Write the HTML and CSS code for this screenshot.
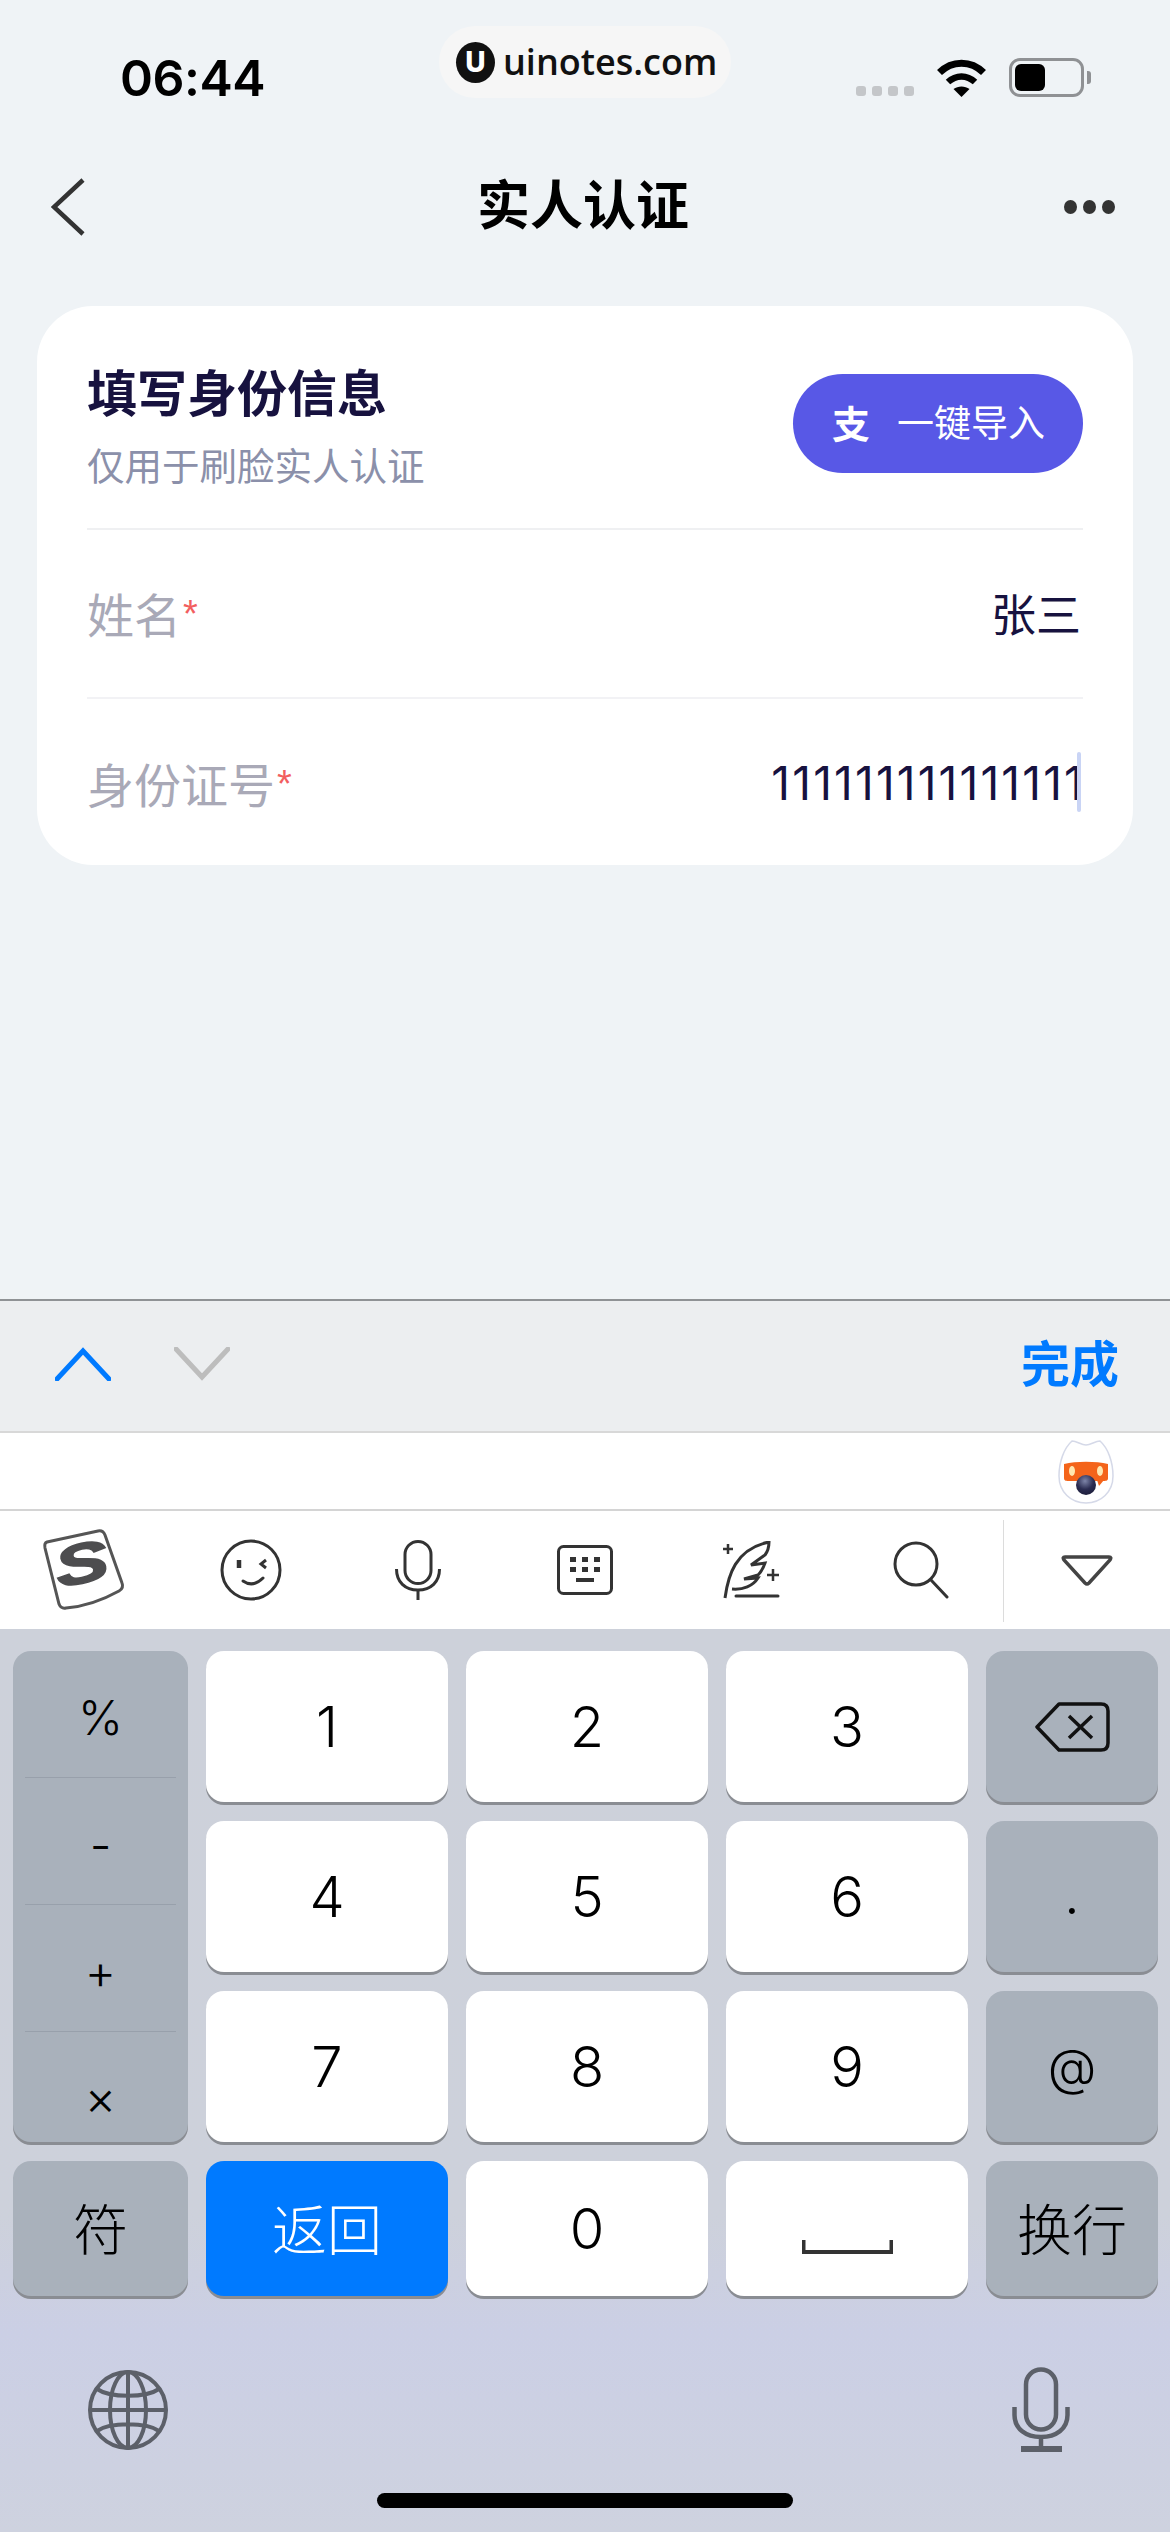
FILE: index.html
```html
<!DOCTYPE html>
<html lang="zh-CN">
<head>
  <meta charset="UTF-8">
  <title>实人认证</title>
  <link rel="stylesheet" href="styles.css">
</head>
<body>
<div class="screen">

  <div class="watermark">
    <span class="wm-logo">U</span>
    <span class="wm-text">uinotes.com</span>
  </div>

  <div class="status-bar">
    <div class="time">06:44</div>
    <div class="status-icons">
      <div class="signal"><i></i><i></i><i></i><i></i></div>
      <svg class="wifi" width="51" height="38" viewBox="0 0 51 38">
        <path d="M3.500 13.500C16 1 35 1 47.500 13.500" fill="none" stroke="#000" stroke-width="7"/>
        <path d="M12 23C20 15.500 31 15.500 39 23" fill="none" stroke="#000" stroke-width="6.500"/>
        <path d="M17.500 30C22 26.500 29 26.500 33.500 30L25.500 38Z" fill="#000"/>
      </svg>
      <div class="battery"><div class="battery-fill"></div></div>
      <div class="battery-nub"></div>
    </div>
  </div>

  <div class="nav-bar">
    <svg class="nav-back" width="34" height="58" viewBox="0 0 34 58">
      <path d="M32 2L3 29L32 56" fill="none" stroke="#333" stroke-width="4.500"/>
    </svg>
    <div class="nav-title">实人认证</div>
    <div class="nav-more"><i></i><i></i><i></i></div>
  </div>

  <div class="card">
    <div class="card-head">
      <div>
        <div class="card-title">填写身份信息</div>
        <div class="card-sub">仅用于刷脸实人认证</div>
      </div>
      <div class="import-btn"><span class="import-logo">支</span><span>一键导入</span></div>
    </div>
    <div class="form-row">
      <div class="form-label">姓名<span class="req">*</span></div>
      <div class="form-value">张三</div>
    </div>
    <div class="form-row">
      <div class="form-label">身份证号<span class="req">*</span></div>
      <div class="form-value digits">111111111111111<span class="cursor"></span></div>
    </div>
  </div>

  <div class="keyboard">
    <div class="toolbar">
      <div class="toolbar-arrows">
        <svg width="56" height="34" viewBox="0 0 56 34">
          <path d="M2 32L28 4L54 32" fill="none" stroke="#007aff" stroke-width="5" stroke-linecap="round"/>
        </svg>
        <svg width="56" height="34" viewBox="0 0 56 34">
          <path d="M2 2L28 30L54 2" fill="none" stroke="#bdbdbd" stroke-width="5" stroke-linecap="round"/>
        </svg>
      </div>
      <div class="toolbar-done">完成</div>
    </div>

    <div class="suggest">
      <svg class="mascot" width="56" height="64" viewBox="0 0 56 64">
        <defs>
          <radialGradient id="ball" cx="0.45" cy="0.3" r="0.7">
            <stop offset="0" stop-color="#7d84a8"/>
            <stop offset="0.6" stop-color="#2b2d52"/>
            <stop offset="1" stop-color="#1d1e3c"/>
          </radialGradient>
        </defs>
        <path d="M14 1C19 1 23 5 28 5C33 5 37 1 42 1C50 8 55 22 55 36C55 52 43 63 28 63C13 63 1 52 1 36C1 22 6 8 14 1Z" fill="#fff" stroke="#d5d9e8" stroke-width="1.500"/>
        <path d="M6 24C18 21 38 21 50 24V38C50 41 48 41 44 41H12C8 41 6 41 6 38Z" fill="#f4641a"/>
        <path d="M39 40H46L41 46Z" fill="#f4641a"/>
        <ellipse cx="14" cy="31" rx="3" ry="5" fill="#ffe7b0"/>
        <ellipse cx="42" cy="31" rx="3" ry="5" fill="#ffe7b0"/>
        <circle cx="28" cy="45" r="10" fill="url(#ball)"/>
      </svg>
    </div>

    <div class="ime-bar">
      <div class="ime-cell">
        <svg width="84" height="84" viewBox="0 0 84 84">
          <path d="M5 14L56 3Q61 2 63 7L80 55Q82 60 77 63Q50 78 24 80Q19 81 17 76L3 20Q2 15 5 14Z" fill="none" stroke="#555" stroke-width="3"/>
          <text class="sogou-s" transform="translate(17 60) rotate(-12) scale(1.45 1)">S</text>
        </svg>
      </div>
      <div class="ime-cell">
        <svg width="64" height="64" viewBox="0 0 64 64" fill="none" stroke="#333" stroke-width="3">
          <circle cx="32" cy="32" r="29"/>
          <path d="M20 22V30" stroke-width="4.500"/>
          <path d="M47 22L42 26L47 30"/>
          <path d="M24 43Q34 50 44 40" stroke-linecap="round"/>
        </svg>
      </div>
      <div class="ime-cell">
        <svg width="46" height="60" viewBox="0 0 46 60" fill="none" stroke="#333" stroke-width="3">
          <rect x="10" y="1.500" width="26" height="42" rx="13"/>
          <path d="M1.500 29C1.500 42 10 50 23 50C36 50 44.500 42 44.500 29"/>
          <path d="M23 50V60"/>
        </svg>
      </div>
      <div class="ime-cell">
        <svg width="56" height="50" viewBox="0 0 56 50">
          <rect x="1.500" y="1.500" width="53" height="47" rx="5" fill="none" stroke="#333" stroke-width="3"/>
          <path d="M13 12h6v5h-6zM25 12h6v5h-6zM37 12h6v5h-6zM13 22h6v5h-6zM25 22h6v5h-6zM37 22h6v5h-6zM19 33h18v4h-18z" fill="#333"/>
        </svg>
      </div>
      <div class="ime-cell">
        <svg width="58" height="58" viewBox="0 0 58 58" fill="none" stroke="#333" stroke-width="3">
          <path d="M2 57C5 35 12 8 46 1C46 6 45 10 42 14L28 24L42 22C40 28 37 32 35 34L21 38L35 37C30 45 20 49 9 48"/>
          <path d="M13 55H55" stroke-linecap="round"/>
          <path d="M5 3V13M0 8H10M50 28V40M44 34H56" stroke-width="2.500"/>
        </svg>
      </div>
      <div class="ime-cell ime-search">
        <svg width="56" height="58" viewBox="0 0 56 58" fill="none" stroke="#333" stroke-width="3">
          <circle cx="23" cy="23" r="21"/>
          <path d="M38 39L54 56" stroke-linecap="round"/>
        </svg>
      </div>
      <div class="ime-cell ime-last">
        <svg width="52" height="32" viewBox="0 0 52 32">
          <path d="M4 2H48Q51 2 49 5L28 28Q26 30 24 28L3 5Q1 2 4 2Z" fill="none" stroke="#444" stroke-width="3.500"/>
        </svg>
      </div>
    </div>

    <div class="keys-area">
      <div class="keys">
        <div class="key key-gray key-column">
          <div class="sym-cell">%</div>
          <div class="sym-cell">-</div>
          <div class="sym-cell">+</div>
          <div class="sym-cell">×</div>
        </div>
        <div class="key">1</div>
        <div class="key">2</div>
        <div class="key">3</div>
        <div class="key key-gray">
          <svg width="75" height="50" viewBox="0 0 75 50" fill="none" stroke="#111" stroke-width="3.500">
            <path d="M24 2H66Q73 2 73 9V41Q73 48 66 48H24L2 25Z" stroke-linejoin="round"/>
            <path d="M34 14L57 36M57 14L34 36"/>
          </svg>
        </div>
        <div class="key">4</div>
        <div class="key">5</div>
        <div class="key">6</div>
        <div class="key key-gray key-dot">.</div>
        <div class="key">7</div>
        <div class="key">8</div>
        <div class="key">9</div>
        <div class="key key-gray key-at">@</div>
        <div class="key key-gray key-cjk">符</div>
        <div class="key key-blue key-cjk">返回</div>
        <div class="key">0</div>
        <div class="key">
          <svg class="space-icon" width="91" height="14" viewBox="0 0 91 14">
            <path d="M1.500 0V12H89.500V0" fill="none" stroke="#333" stroke-width="4"/>
          </svg>
        </div>
        <div class="key key-gray key-cjk">换行</div>
      </div>

      <div class="keys-bottom">
        <svg width="80" height="80" viewBox="0 0 80 80" fill="none" stroke="#5c6069" stroke-width="4">
          <circle cx="40" cy="40" r="38"/>
          <ellipse cx="40" cy="40" rx="18" ry="38"/>
          <path d="M40 2V78M2 40H78M9 19C22 28 58 28 71 19M9 61C22 52 58 52 71 61"/>
        </svg>
        <svg width="58" height="85" viewBox="0 0 58 85" fill="none" stroke="#5c6069" stroke-width="4.500">
          <rect x="14" y="2.500" width="30" height="60" rx="15"/>
          <path d="M2.500 40V48C2.500 62 14 70 29 70C44 70 55.500 62 55.500 48V40"/>
          <path d="M29 70V80"/>
          <path d="M9 82H50" stroke-width="6"/>
        </svg>
      </div>

      <div class="home-bar"></div>
    </div>
  </div>

</div>
</body>
</html>
```

FILE: styles.css
```css
* {
  box-sizing: border-box;
}

body {
  margin: 0;
  font-family: "Inter", "Noto Sans CJK SC", sans-serif;
  background-color: #eff3f6;
}

.screen {
  position: relative;
  width: 1170px;
  height: 2532px;
  display: flex;
  flex-direction: column;
  overflow: hidden;
}

/* watermark sits over the status bar */
.watermark {
  position: absolute;
  left: 439px;
  top: 26px;
  width: 292px;
  height: 72px;
  border-radius: 36px;
  background-color: #f6f6f6;
  display: flex;
  align-items: center;
  padding-left: 17px;
  gap: 8px;
}

.wm-logo {
  width: 39px;
  height: 41px;
  border-radius: 50%;
  background-color: #111;
  color: #fff;
  font-size: 28px;
  font-weight: 800;
  line-height: 40px;
  text-align: center;
}

.wm-text {
  font-family: "Open Sans", sans-serif;
  font-size: 36px;
  font-weight: 600;
  color: #111;
  margin-top: -2px;
}

/* status bar */
.status-bar {
  height: 157px;
  padding: 48px 79px 0 120px;
  display: flex;
  justify-content: space-between;
  align-items: flex-start;
}

.time {
  font-size: 50px;
  font-weight: 600;
  line-height: 60px;
  letter-spacing: -0.500px;
  color: #000;
}

.status-icons {
  display: flex;
  align-items: flex-end;
  margin-top: 10px;
}

.signal {
  display: flex;
  gap: 6px;
  margin-right: 22px;
  margin-bottom: 1px;
}

.signal i {
  display: block;
  width: 10px;
  height: 10px;
  border-radius: 3px;
  background-color: #c4c6c9;
}

.wifi {
  margin-right: 22px;
}

.battery {
  width: 75px;
  height: 39px;
  border: 3px solid #8f9194;
  border-radius: 11px;
  padding: 3px;
}

.battery-fill {
  width: 30px;
  height: 27px;
  border-radius: 6px;
  background-color: #000;
}

.battery-nub {
  width: 4px;
  height: 13px;
  margin: 0 0 13px 3px;
  border-radius: 0 3px 3px 0;
  background-color: #8f9194;
}

/* nav */
.nav-bar {
  height: 100px;
  padding: 0 55px 0 51px;
  display: grid;
  grid-template-columns: 1fr auto 1fr;
  align-items: center;
}

.nav-title {
  font-size: 53px;
  font-weight: 700;
  line-height: 70px;
  margin-bottom: 2px;
  color: #000;
}

.nav-more {
  justify-self: end;
  display: flex;
  gap: 6px;
}

.nav-more i {
  display: block;
  width: 13px;
  height: 14px;
  border-radius: 50%;
  background-color: #333;
}

/* card */
.card {
  margin: 49px 37px 0;
  height: 559px;
  padding: 0 50px;
  border-radius: 56px;
  background-color: #fff;
}

.card-head {
  height: 224px;
  padding-top: 55px;
  border-bottom: 2px solid #eff0f2;
  display: flex;
  justify-content: space-between;
  align-items: flex-start;
}

.card-title {
  font-size: 50px;
  font-weight: 700;
  line-height: 66px;
  color: #17123f;
}

.card-sub {
  font-size: 37.500px;
  line-height: 58px;
  margin-top: 11px;
  color: #8b90aa;
}

.import-btn {
  width: 290px;
  height: 99px;
  margin-top: 13px;
  padding: 0 0 5px 39px;
  border-radius: 50px;
  background-color: #5858e6;
  color: #fff;
  font-size: 37px;
  display: flex;
  align-items: center;
  gap: 27px;
}

.import-logo {
  font-size: 38px;
  font-weight: 700;
}

.form-row {
  height: 169px;
  padding-bottom: 2px;
  border-bottom: 2px solid #f2f2f5;
  display: flex;
  justify-content: space-between;
  align-items: center;
}

.form-row:last-child {
  border-bottom: none;
}

.form-label {
  font-size: 47px;
  color: #a9a9b7;
}

.req {
  font-family: "Liberation Sans", sans-serif;
  font-size: 38px;
  color: #f25f5f;
  vertical-align: 6px;
  margin-left: 2px;
}

.form-value {
  position: relative;
  font-size: 45px;
  color: #17123f;
  margin-right: 2px;
}

.digits {
  font-size: 46px;
  font-weight: 400;
  letter-spacing: 2.200px;
  margin-right: -2px;
}

.cursor {
  position: absolute;
  right: 4px;
  top: -3px;
  width: 4px;
  height: 60px;
  border-radius: 2px;
  background-color: #c9d4f5;
}

/* keyboard */
.keyboard {
  margin-top: auto;
  display: flex;
  flex-direction: column;
}

.toolbar {
  height: 132px;
  padding: 0 51px 0 55px;
  border-top: 2px solid #8f9295;
  background-color: #eceef0;
  display: flex;
  justify-content: space-between;
  align-items: center;
}

.toolbar-arrows {
  display: flex;
  gap: 63px;
  margin-bottom: 4px;
}

.toolbar-done {
  font-size: 49px;
  font-weight: 700;
  line-height: 60px;
  margin-bottom: 2px;
  color: #007aff;
}

.suggest {
  position: relative;
  height: 78px;
  border-top: 2px solid #d8d8d8;
  background-color: #fff;
}

.mascot {
  position: absolute;
  right: 56px;
  top: 7px;
}

.ime-bar {
  height: 120px;
  border-top: 2px solid #d4d4d4;
  background-color: #fff;
  display: grid;
  grid-template-columns: repeat(7, 1fr);
}

.ime-cell {
  display: flex;
  align-items: center;
  justify-content: center;
}

.ime-search {
  padding-left: 4px;
}

.ime-last {
  margin: 9px 0 7px;
  border-left: 1px solid #dcdcdc;
}

.sogou-s {
  font-family: "Liberation Sans", sans-serif;
  font-size: 56px;
  font-weight: 700;
  font-style: italic;
  fill: #4d4d4f;
  stroke: #4d4d4f;
  stroke-width: 1.500px;
}

.keys-area {
  height: 903px;
  padding: 22px 13px 0;
  background: linear-gradient(180deg, #cdd1da 0%, #cdd1db 65%, #cbcfe5 78%, #ced2df 100%);
  display: flex;
  flex-direction: column;
}

.keys {
  display: grid;
  grid-template-columns: 175px 242px 242px 242px 172px;
  grid-template-rows: 151px 151px 151px 135px;
  gap: 19px 18px;
}

.key {
  border-radius: 18px;
  background-color: #fff;
  box-shadow: 0 3px 0 #8a8d93;
  display: flex;
  align-items: center;
  justify-content: center;
  font-size: 56px;
  font-weight: 300;
  color: #000;
}

.key-gray {
  background-color: #a9b1bb;
}

.key-blue {
  background-color: #007aff;
  color: #fff;
}

.key-cjk {
  font-size: 55px;
  padding-bottom: 5px;
}

.key-at {
  font-size: 50px;
}

.key-dot {
  padding-bottom: 6px;
}

.space-icon {
  margin-top: 36px;
}

.key-column {
  grid-row: 1 / 4;
  flex-direction: column;
  padding: 0 12px;
}

.sym-cell {
  width: 100%;
  height: 127px;
  padding-top: 6px;
  border-bottom: 1px solid #98a0ab;
  display: flex;
  align-items: center;
  justify-content: center;
  font-size: 48px;
}

.sym-cell:last-child {
  border-bottom: none;
  padding-top: 20px;
  height: 110px;
}

.keys-bottom {
  margin-top: 71px;
  height: 85px;
  padding: 0 87px 0 75px;
  display: flex;
  justify-content: space-between;
  align-items: center;
}

.home-bar {
  align-self: center;
  width: 416px;
  height: 15px;
  margin-top: 41px;
  border-radius: 8px;
  background-color: #000;
}
```
